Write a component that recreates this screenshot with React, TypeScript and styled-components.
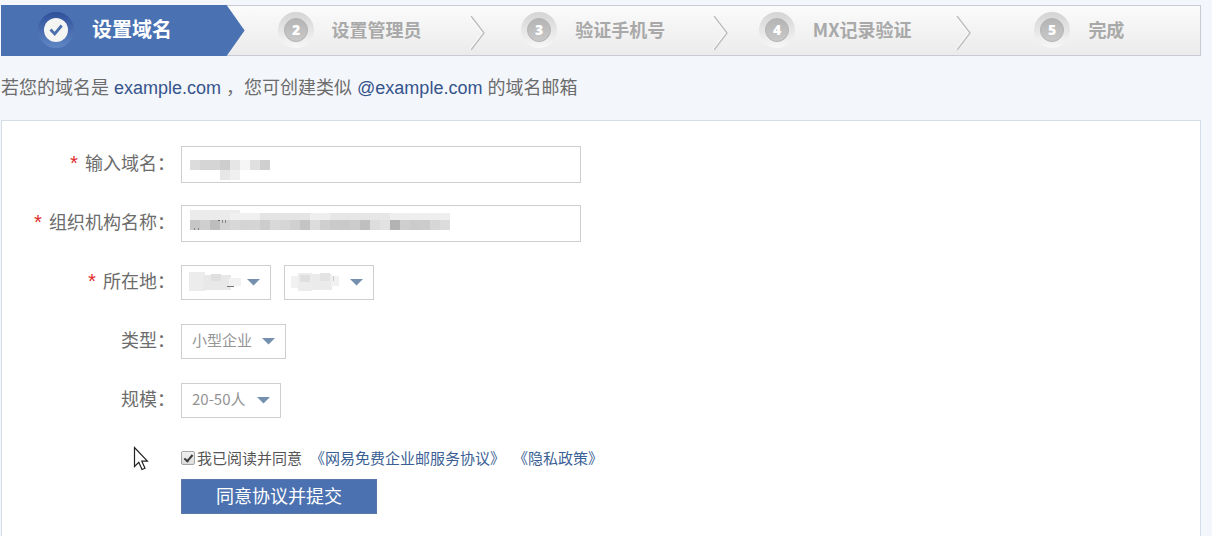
import React from "react";
import styled, { createGlobalStyle } from "styled-components";

const GlobalStyle = createGlobalStyle`
  *, *::before, *::after { box-sizing: border-box; }
  body {
    margin: 0;
    background: #f3f6fb;
    color: #6c6c6c;
    font-family: "Liberation Sans", "Noto Sans CJK SC", sans-serif;
    font-size: 18px;
    line-height: 24px;
  }
`;

const Page = styled.main`
  display: flex;
  flex-direction: column;
  min-height: 100vh;
  padding: 5px 11px 0 1px;
`;

const Steps = styled.ol`
  display: grid;
  grid-template-columns: 243fr 241fr 243fr 244fr 229fr;
  margin: 0;
  padding: 0;
  list-style: none;
  height: 51px;
  border: 1px solid #c8cbd4;
  background: linear-gradient(#fbfbfb, #ebebeb);
`;

const StepItem = styled.li<{ $active?: boolean; $inset: number }>`
  position: relative;
  display: flex;
  align-items: center;
  gap: 18px;
  margin: ${(p) => (p.$active ? "-1px 0 -1px -1px" : "0")};
  padding: 0 0 1px ${(p) => p.$inset}px;
  background: ${(p) => (p.$active ? "#4a72b2" : "transparent")};
  clip-path: ${(p) =>
    p.$active
      ? "polygon(0 0, calc(100% - 18px) 0, 100% 50%, calc(100% - 18px) 100%, 0 100%)"
      : "none"};
  color: ${(p) => (p.$active ? "#fff" : "#a9a9a9")};
  font-family: "Noto Sans CJK SC", sans-serif;
  font-size: ${(p) => (p.$active ? 20 : 18)}px;
  font-weight: 700;
  white-space: nowrap;
`;

const StepTitle = styled.span`
  padding-bottom: 2px;
`;

const Badge = styled.svg`
  flex: none;
  width: 36px;
  height: 36px;
`;

const Chevron = styled.svg`
  position: absolute;
  right: 0;
  top: 10px;
  width: 16px;
  height: 34px;
`;

const Intro = styled.p`
  margin: 20px 0;
  line-height: 24px;
  white-space: pre-wrap;
`;

const Domain = styled.span`
  color: #36548c;
`;

const Card = styled.form`
  position: relative;
  flex: 1;
  display: flex;
  flex-direction: column;
  gap: 22px;
  padding: 25px 0 22px;
  border: 1px solid #d5dde8;
  border-bottom: 0;
  background: #fff;
`;

const Row = styled.div`
  display: grid;
  grid-template-columns: 173px 1fr;
  column-gap: 6px;
  align-items: center;
  height: 37px;
`;

const Label = styled.label`
  display: flex;
  justify-content: flex-end;
  align-items: center;
  gap: 5px;
  padding-bottom: 5px;
  font-family: "Noto Sans CJK SC", sans-serif;
  line-height: 24px;
  white-space: nowrap;
`;

const Required = styled.span`
  padding-top: 8px;
  color: #e02a2a;
  font-family: "Liberation Mono", monospace;
  font-size: 20px;
`;

const Controls = styled.div`
  display: flex;
  gap: 13px;
`;

const Field = styled.div<{ $width: number }>`
  position: relative;
  width: ${(p) => p.$width}px;
`;

const TextInput = styled.input`
  display: block;
  width: 100%;
  height: 37px;
  padding: 0 9px;
  border: 1px solid #cfcfcf;
  border-radius: 0;
  background: #fff;
  color: #666;
  font: inherit;
`;

const Select = styled.select`
  display: block;
  width: 100%;
  height: 35px;
  padding: 0 24px 4px 10px;
  appearance: none;
  border: 1px solid #cfcfcf;
  border-radius: 0;
  background: #fff;
  color: #949494;
  font-family: "Noto Sans CJK SC", sans-serif;
  font-size: 15px;
`;

const Arrow = styled.svg`
  position: absolute;
  right: 11px;
  top: 14px;
  width: 13px;
  height: 7px;
  pointer-events: none;
`;

const Mask = styled.svg`
  position: absolute;
  left: 0;
  top: 0;
  pointer-events: none;
`;

const Submit = styled.div`
  display: flex;
  flex-direction: column;
  align-items: flex-start;
  gap: 9px;
  margin-top: 5px;
  padding-left: 179px;
`;

const Agreement = styled.div`
  display: flex;
  align-items: center;
  height: 24px;
  color: #555;
  font-family: "Noto Sans CJK SC", sans-serif;
  font-size: 15px;
  white-space: nowrap;
`;

const Checkbox = styled.input`
  display: grid;
  place-items: center;
  appearance: none;
  width: 14px;
  height: 14px;
  margin: 0 2px 0 0;
  border: 1px solid #a5a5a5;
  border-radius: 2px;
  background: linear-gradient(#f2f2f2, #dcdcdc);

  &:checked::after {
    content: "";
    width: 5px;
    height: 9px;
    margin-bottom: 2px;
    border: solid #3c3c3c;
    border-width: 0 2px 2px 0;
    transform: rotate(40deg);
  }
`;

const PolicyLink = styled.a`
  margin-left: 8px;
  color: #3b5f94;
  text-decoration: none;
`;

const SubmitButton = styled.button`
  width: 196px;
  height: 35px;
  padding: 0 0 4px;
  border: 1px solid #5a77a8;
  background: #4b71b0;
  color: #fff;
  font-family: "Noto Sans CJK SC", sans-serif;
  font-size: 18px;
  line-height: 24px;
`;

const Pointer = styled.svg`
  position: absolute;
  left: 131px;
  top: 325px;
  width: 16px;
  height: 26px;
  pointer-events: none;
`;

function StepBadge({ n }: { n: number }) {
  if (n === 1) {
    return (
      <Badge viewBox="0 0 36 36" aria-hidden="true">
        <defs>
          <linearGradient id="ringActive" x1="0" y1="0" x2="0" y2="1">
            <stop offset="0" stopColor="#30509a" />
            <stop offset="1" stopColor="#6087c4" />
          </linearGradient>
        </defs>
        <circle cx="18" cy="18" r="18" fill="url(#ringActive)" />
        <circle cx="18" cy="18" r="12" fill="#f5f6f3" />
        <path d="M12.5 17.5l4.2 4.5 7-8.5" fill="none" stroke="#4b70ad" strokeWidth="2.8" />
      </Badge>
    );
  }
  return (
    <Badge viewBox="0 0 36 36" aria-hidden="true">
      <defs>
        <linearGradient id={"ring" + n} x1="0" y1="0" x2="0" y2="1">
          <stop offset="0" stopColor="#d4d4d4" />
          <stop offset="1" stopColor="#f7f7f7" />
        </linearGradient>
        <linearGradient id={"disc" + n} x1="0" y1="0" x2="0" y2="1">
          <stop offset="0" stopColor="#b4b4b4" />
          <stop offset="1" stopColor="#c9c9c9" />
        </linearGradient>
      </defs>
      <circle cx="18" cy="18" r="18" fill={"url(#ring" + n + ")"} />
      <circle cx="18" cy="18" r="11.5" fill={"url(#disc" + n + ")"} stroke="#b4b4b4" />
      <text
        x="18"
        y="23"
        textAnchor="middle"
        fill="#fff"
        fontFamily="Open Sans, sans-serif"
        fontSize="14"
        fontWeight="800"
      >
        {n}
      </text>
    </Badge>
  );
}

const steps = [
  { title: "设置域名", inset: 37 },
  { title: "设置管理员", inset: 33 },
  { title: "验证手机号", inset: 36 },
  { title: "MX记录验证", inset: 31 },
  { title: "完成", inset: 63 },
];

type Cell = [x: number, y: number, w: number, h: number, fill: string];

const domainMask: Cell[] = [
  [9, 14, 10, 10, "#dcdcdc"],
  [19, 14, 20, 10, "#d5d5d5"],
  [39, 14, 10, 10, "#cdcdcd"],
  [49, 14, 10, 10, "#e6e6e6"],
  [59, 14, 10, 10, "#f6f6f6"],
  [69, 14, 10, 10, "#e0e0e0"],
  [79, 14, 10, 10, "#cfcfcf"],
  [39, 24, 10, 10, "#e7e7e7"],
  [49, 24, 10, 10, "#f0f0f0"],
];

const orgShades = [
  "c6", "cf", "bd", "d2", "d8", "d4", "d5", "cc", "d9", "d6", "d0", "c4", "dc",
  "cf", "ca", "c9", "cc", "bf", "dd", "e2", "b3", "cf", "cb", "cc", "d7", "dc",
];

const orgMask: Cell[] = [
  [9, 5, 50, 10, "#ebebeb"],
  [49, 8, 30, 7, "#f0f0f0"],
  [79, 8, 50, 7, "#e4e4e4"],
  [129, 8, 20, 7, "#eeeeee"],
  [149, 8, 60, 7, "#e6e6e6"],
  [209, 8, 60, 7, "#eeeeee"],
  ...orgShades.map((s, i): Cell => [9 + i * 10, 15, 10, 10, "#" + s + s + s]),
  [37, 15, 2, 1, "#666"],
  [41, 15, 1, 3, "#888"],
  [44, 15, 1, 3, "#888"],
  [13, 23, 1, 2, "#888"],
  [17, 23, 1, 2, "#888"],
];

const provinceMask: Cell[] = [
  [8, 7, 16, 19, "#ececec"],
  [22, 10, 28, 15, "#e8e8e8"],
  [30, 9, 10, 7, "#dfdfdf"],
  [48, 13, 12, 8, "#f1f1f1"],
  [46, 21, 7, 1, "#777"],
];

const cityMask: Cell[] = [
  [7, 11, 10, 12, "#f1f1f1"],
  [14, 8, 14, 18, "#ececec"],
  [16, 10, 10, 7, "#dfdfdf"],
  [28, 9, 20, 16, "#ebebeb"],
  [36, 8, 10, 8, "#e3e3e3"],
  [47, 11, 8, 10, "#f1f1f1"],
  [49, 11, 1, 5, "#c8c8c8"],
];

function Mosaic({ cells, width, height }: { cells: Cell[]; width: number; height: number }) {
  return (
    <Mask width={width} height={height} aria-hidden="true">
      {cells.map(([x, y, w, h, fill], i) => (
        <rect key={i} x={x} y={y} width={w} height={h} fill={fill} />
      ))}
    </Mask>
  );
}

interface DropdownProps {
  id: string;
  width: number;
  value?: string;
  label?: string;
  mask?: Cell[];
}

function Dropdown({ id, width, value = "", label, mask }: DropdownProps) {
  return (
    <Field $width={width}>
      <Select id={id} aria-label={label} defaultValue={value}>
        <option value={value}>{value}</option>
      </Select>
      {mask && <Mosaic cells={mask} width={70} height={35} />}
      <Arrow viewBox="0 0 13 7" aria-hidden="true">
        <path d="M0 0h13L6.5 6.5z" fill="#7590ae" />
      </Arrow>
    </Field>
  );
}

export default function App() {
  return (
    <>
      <GlobalStyle />
      <Page>
        <Steps>
          {steps.map((s, i) => (
            <StepItem key={s.title} $active={i === 0} $inset={s.inset}>
              <StepBadge n={i + 1} />
              <StepTitle>{s.title}</StepTitle>
              {i > 0 && i < steps.length - 1 && (
                <Chevron viewBox="0 0 16 34" aria-hidden="true">
                  <path d="M1 0l13 17L1 34" fill="none" stroke="#fff" strokeWidth="1.5" />
                  <path d="M2 0l13 17L2 34" fill="none" stroke="#bdbdbd" strokeWidth="1.4" />
                </Chevron>
              )}
            </StepItem>
          ))}
        </Steps>
        <Intro>
          若您的域名是 <Domain>example.com</Domain> ，您可创建类似 <Domain>@example.com</Domain> 的域名邮箱
        </Intro>
        <Card onSubmit={(e: React.FormEvent) => e.preventDefault()}>
          <Row>
            <Label htmlFor="domain">
              <Required>*</Required>输入域名：
            </Label>
            <Field $width={400}>
              <TextInput id="domain" type="text" />
              <Mosaic cells={domainMask} width={300} height={37} />
            </Field>
          </Row>
          <Row>
            <Label htmlFor="organization">
              <Required>*</Required>组织机构名称：
            </Label>
            <Field $width={400}>
              <TextInput id="organization" type="text" />
              <Mosaic cells={orgMask} width={300} height={37} />
            </Field>
          </Row>
          <Row>
            <Label htmlFor="province">
              <Required>*</Required>所在地：
            </Label>
            <Controls>
              <Dropdown id="province" width={90} mask={provinceMask} />
              <Dropdown id="city" width={90} label="城市" mask={cityMask} />
            </Controls>
          </Row>
          <Row>
            <Label htmlFor="type">类型：</Label>
            <Dropdown id="type" width={105} value="小型企业" />
          </Row>
          <Row>
            <Label htmlFor="scale">规模：</Label>
            <Dropdown id="scale" width={100} value="20-50人" />
          </Row>
          <Submit>
            <Agreement>
              <Checkbox id="agree" type="checkbox" defaultChecked />
              <label htmlFor="agree">我已阅读并同意</label>
              <PolicyLink href="#terms">《网易免费企业邮服务协议》</PolicyLink>
              <PolicyLink href="#privacy">《隐私政策》</PolicyLink>
            </Agreement>
            <SubmitButton type="submit">同意协议并提交</SubmitButton>
          </Submit>
          <Pointer viewBox="0 0 16 26" aria-hidden="true">
            <path
              d="M1.5 1.5v19l4.3-4.2 3.2 7.2 3-1.3-3.2-7h5.6z"
              fill="#fff"
              stroke="#222"
              strokeWidth="1.2"
            />
          </Pointer>
        </Card>
      </Page>
    </>
  );
}
